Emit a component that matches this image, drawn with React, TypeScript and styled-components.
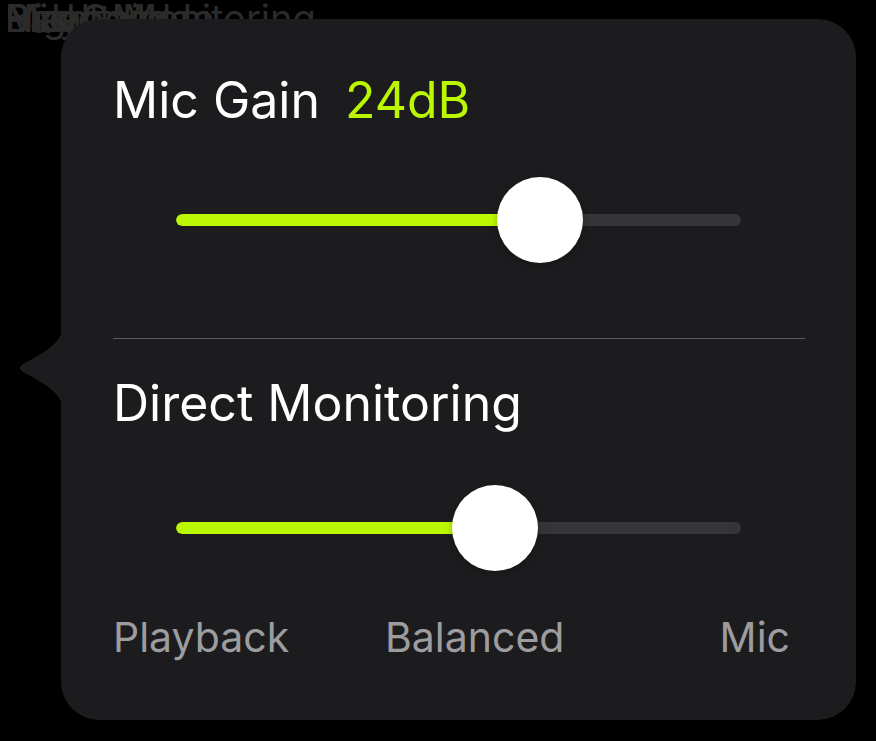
import styled, { createGlobalStyle } from "styled-components";

const GlobalStyle = createGlobalStyle`
  html, body {
    margin: 0;
    padding: 0;
    background: #000;
  }
  body {
    font-family: Inter, "Noto Sans", sans-serif;
    -webkit-font-smoothing: antialiased;
  }
`;

type SliderProps = {
  value: number;
};

const Slider = ({ value }: SliderProps) => {
  return (
    <SliderWrap>
      <Track>
        <Fill style={{ width: `${value * 100}%` }} />
      </Track>
      <Thumb style={{ left: `${value * 100}%` }} />
    </SliderWrap>
  );
};

export default function App() {
  return (
    <>
      <GlobalStyle />
      <Screen>
        <GhostLayer aria-hidden>
          <Ghost>Direct Monitoring</Ghost>
          <Ghost>Mic Gain</Ghost>
          <Ghost>Playback</Ghost>
          <Ghost>Balanced</Ghost>
          <Ghost>Night Mode</Ghost>
        </GhostLayer>
        <Popover>
          <Arrow width="44" height="100" viewBox="0 0 44 100">
            <path d="M44 0 C44 18 36 26 24 34 C8 44 0 46 0 50 C0 54 8 56 24 66 C36 74 44 82 44 100 Z" fill="#1c1c1e" />
          </Arrow>
          <Section>
            <Title>
              Mic Gain<Value>24dB</Value>
            </Title>
            <SliderRow $top={47}>
              <Slider value={0.644} />
            </SliderRow>
          </Section>
          <Divider />
          <Section>
            <Title $top={34}>Direct Monitoring</Title>
            <SliderRow $top={52}>
              <Slider value={0.565} />
            </SliderRow>
            <Labels>
              <Label>Playback</Label>
              <Label>Balanced</Label>
              <Label $align="right">Mic</Label>
            </Labels>
          </Section>
        </Popover>
      </Screen>
    </>
  );
}

const Screen = styled.div`
  position: relative;
  width: 876px;
  height: 741px;
  padding: 19px 20px 0 61px;
  box-sizing: border-box;
  overflow: hidden;
`;

const GhostLayer = styled.div`
  position: absolute;
  left: 5px;
  top: -4px;
`;

const Ghost = styled.div`
  position: absolute;
  left: 0;
  top: 0;
  white-space: nowrap;
  font-size: 38px;
  line-height: 44px;
  color: #2b2b2b;
`;

const Popover = styled.div`
  position: relative;
  width: 795px;
  height: 701px;
  box-sizing: border-box;
  padding: 51px 51px 0 52px;
  background: #1c1c1e;
  border-radius: 38px;
`;

const Arrow = styled.svg`
  position: absolute;
  left: -41px;
  top: 299px;
  display: block;
`;

const Section = styled.div`
  display: flex;
  flex-direction: column;
`;

const Title = styled.div<{ $top?: number }>`
  margin-top: ${(p) => p.$top ?? 0}px;
  font-size: 50px;
  line-height: 60px;
  font-weight: 400;
  color: #ffffff;
  white-space: nowrap;
`;

const Value = styled.span`
  margin-left: 25px;
  color: #bbf700;
`;

const SliderRow = styled.div<{ $top: number }>`
  margin-top: ${(p) => p.$top}px;
  padding: 0 64px 0 63px;
`;

const SliderWrap = styled.div`
  position: relative;
  height: 86px;
  display: flex;
  align-items: center;
`;

const Track = styled.div`
  position: relative;
  width: 100%;
  height: 12px;
  border-radius: 6px;
  background: #353537;
  overflow: hidden;
`;

const Fill = styled.div`
  height: 100%;
  border-radius: 6px;
  background: #bbf700;
`;

const Thumb = styled.div`
  position: absolute;
  top: 0;
  width: 86px;
  height: 86px;
  border-radius: 50%;
  background: #ffffff;
  transform: translateX(-50%);
  box-shadow: 0 2px 6px rgba(0, 0, 0, 0.25);
`;

const Divider = styled.div`
  margin-top: 75px;
  height: 1px;
  background: #5a5a5c;
`;

const Labels = styled.div`
  margin-top: 42px;
  display: grid;
  grid-template-columns: 272px 1fr auto;
  padding-right: 15px;
`;

const Label = styled.div<{ $align?: "left" | "right" }>`
  font-size: 41px;
  line-height: 48px;
  color: #9d9d9f;
  text-align: ${(p) => p.$align ?? "left"};
  white-space: nowrap;
`;
